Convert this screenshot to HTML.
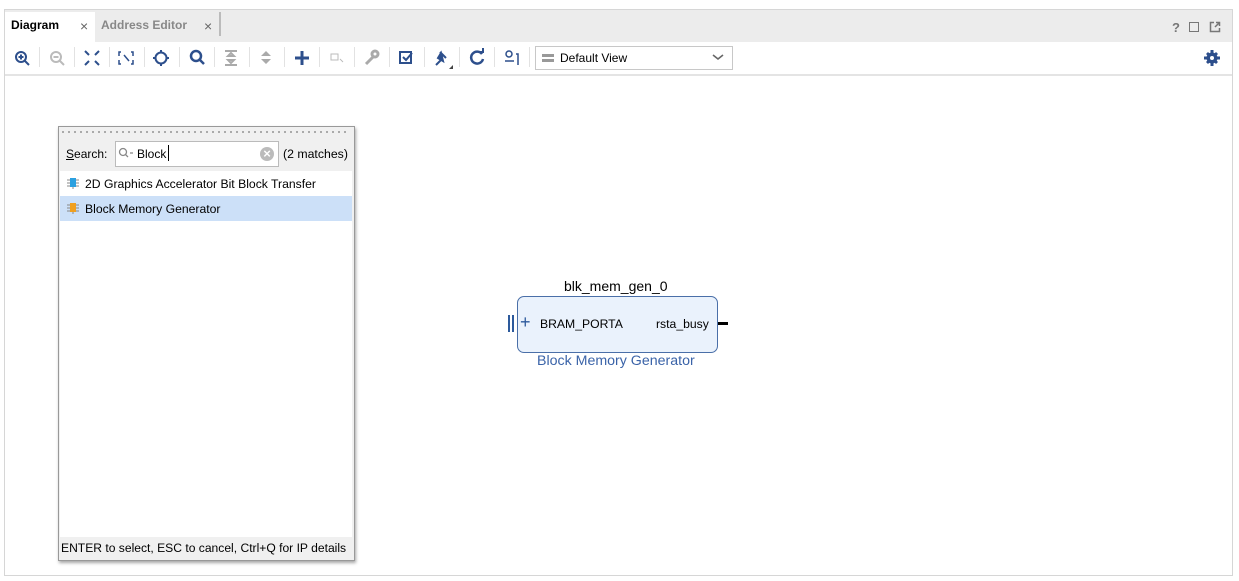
<!DOCTYPE html><html><head><style>
body{margin:0;width:1239px;height:581px;background:#fff;font-family:"Liberation Sans",sans-serif;position:relative;overflow:hidden}
.a{position:absolute}
.sep{position:absolute;top:47px;width:1px;height:20px;background:#e2e2e2}
</style></head><body>
<div class="a" style="left:4px;top:9px;width:1227px;height:565px;border:1px solid #d6d6d6;background:#fff"></div>
<div class="a" style="left:5px;top:10px;width:1227px;height:32px;background:#ececec"></div>
<div class="a" style="left:5px;top:12px;width:90px;height:30px;background:#fff"></div>
<div class="a" style="left:11px;top:18px;font-size:12px;font-weight:bold;color:#000">Diagram</div>
<div class="a" style="left:80px;top:18px;font-size:14px;color:#666">×</div>
<div class="a" style="left:101px;top:18px;font-size:12px;font-weight:bold;color:#888">Address Editor</div>
<div class="a" style="left:204px;top:18px;font-size:14px;color:#666">×</div>
<div class="a" style="left:219px;top:12px;width:2px;height:24px;background:#bbb"></div>
<div class="a" style="left:1172px;top:20px;font-size:13px;font-weight:bold;color:#777">?</div>
<div class="a" style="left:1189px;top:22px;width:8px;height:8px;border:1.5px solid #777"></div>
<svg class="a" style="left:1209px;top:21px" width="12" height="12"><path d="M5 1.5H1.5v9h9V7M7 1.5h3.5V5M10.5 1.5L6 6" stroke="#777" stroke-width="1.5" fill="none"/></svg>
<div class="a" style="left:5px;top:74px;width:1227px;height:2px;background:#e4e4e4"></div>
<svg class="a" style="left:0;top:40px" width="540" height="36" fill="none" stroke-width="2">
<g stroke="#2d4f8c"><circle cx="21" cy="17" r="5"/><path d="M25 21l4 4M18.5 17h5M21 14.5v5"/></g>
<g stroke="#bbb"><circle cx="56" cy="17" r="5"/><path d="M60 21l4 4M53.5 17h5"/></g>
<g stroke="#2d4f8c"><path d="M85 11l4 4M99 11l-4 4M85 25l4-4M99 25l-4-4"/></g>
<g stroke="#2d4f8c" stroke-width="1.5"><path d="M121 12h-2v4M131 12h2v4M121 24h-2v-4M131 24h2v-4"/><path d="M124 15l5 6" /></g>
<g stroke="#2d4f8c"><circle cx="161" cy="18" r="5.5"/><path d="M161 10v3M161 23v3M153 18h3M166 18h3"/></g>
<g stroke="#2d4f8c" stroke-width="2.5"><circle cx="196" cy="16" r="5"/><path d="M200 20l4 4"/></g>
<g stroke="#aaa"><path d="M225 11h12M225 25h12M231 13l-3 3h6zM231 23l-3-3h6z"/></g>
<g fill="#aaa" stroke="none"><path d="M261 16l5-5 5 5zM261 19l5 5 5-5z"/></g>
<g stroke="#2d4f8c" stroke-width="3"><path d="M302 11v14M295 18h14"/></g>
<g stroke="#bbb" stroke-width="1"><rect x="331" y="14" width="7" height="6"/><path d="M340 19l3 3"/></g>
<g stroke="#aaa" stroke-width="3"><path d="M366 24l7-7"/><circle cx="375" cy="14" r="3"/></g>
<g stroke="#2d4f8c"><rect x="400" y="12" width="11" height="11"/><path d="M403 17l3 3 6-7"/></g>
<g fill="#2d4f8c" stroke="#2d4f8c"><path d="M436 25l5-5M440 12l6 6M441 13l-3 5 5 3z"/></g><path d="M449 29l4-4v4z" fill="#444"/>
<g stroke="#2d4f8c" stroke-width="2.5"><path d="M482 14a6 6 0 1 0 1 5"/><path d="M478 12h5v-4" stroke-width="2"/></g>
<g stroke="#2d4f8c" stroke-width="1.5"><circle cx="509" cy="14" r="3"/><path d="M505 21h9M516 14h2v11"/></g>
</svg>
<div class="sep" style="left:39px"></div><div class="sep" style="left:74px"></div><div class="sep" style="left:109px"></div><div class="sep" style="left:144px"></div><div class="sep" style="left:179px"></div><div class="sep" style="left:214px"></div><div class="sep" style="left:249px"></div><div class="sep" style="left:284px"></div><div class="sep" style="left:319px"></div><div class="sep" style="left:354px"></div><div class="sep" style="left:389px"></div><div class="sep" style="left:424px"></div><div class="sep" style="left:459px"></div><div class="sep" style="left:494px"></div><div class="sep" style="left:529px"></div>
<div class="a" style="left:535px;top:46px;width:196px;height:22px;border:1px solid #c8c8c8;background:#fff"></div>
<div class="a" style="left:542px;top:54px;width:12px;height:3px;background:#999;box-shadow:0 5px 0 #999"></div>
<div class="a" style="left:560px;top:51px;font-size:12px;color:#000">Default View</div>
<svg class="a" style="left:712px;top:53px" width="12" height="8"><path d="M1 2l5 4 5-4" stroke="#666" stroke-width="1.6" fill="none"/></svg>
<svg class="a" style="left:1203px;top:49px" width="18" height="18"><g fill="#2d4f8c"><circle cx="9" cy="9" r="5.5"/><path d="M7.5 1h3v16h-3zM1 7.5h16v3H1z"/><path d="M3 5l2-2 10 10-2 2zM13 3l2 2-10 10-2-2z"/></g><circle cx="9" cy="9" r="2" fill="#fff"/></svg>
<div class="a" style="left:58px;top:126px;width:295px;height:433px;background:#f0f0f0;border:1px solid #999;box-shadow:1px 2px 3px rgba(0,0,0,.35)"></div>
<div class="a" style="left:62px;top:131px;width:288px;height:2px;background:repeating-linear-gradient(90deg,#aaa 0 2px,transparent 2px 6px)"></div>
<div class="a" style="left:66px;top:147px;font-size:12px;color:#000"><u>S</u>earch:</div>
<div class="a" style="left:115px;top:141px;width:162px;height:24px;border:1px solid #bbb;background:#fff"></div>
<svg class="a" style="left:118px;top:147px" width="16" height="12"><circle cx="5" cy="5" r="3.5" stroke="#888" fill="none" stroke-width="1.3"/><path d="M7.5 7.5l2.5 2.5M12 6h3" stroke="#888" stroke-width="1.3"/></svg>
<div class="a" style="left:137px;top:147px;font-size:12px;color:#000">Block</div>
<div class="a" style="left:168px;top:145px;width:1px;height:16px;background:#000"></div>
<div class="a" style="left:260px;top:147px;width:14px;height:14px;border-radius:50%;background:#bbb;color:#fff;font-size:13px;line-height:13px;text-align:center;font-weight:bold">×</div>
<div class="a" style="left:283px;top:147px;font-size:12.3px;color:#000">(2 matches)</div>
<div class="a" style="left:60px;top:171px;width:292px;height:366px;background:#fff"></div>
<div class="a" style="left:60px;top:196px;width:292px;height:25px;background:#cce0f8"></div>
<svg class="a" style="left:66px;top:177px" width="14" height="12"><path d="M1 3h3M1 6h3M1 9h3M10 3h3M10 6h3M10 9h3M7 10v2" stroke="#888" stroke-width="1"/><rect x="4" y="1" width="6" height="9" fill="#2ba0e0"/></svg>
<div class="a" style="left:85px;top:177px;font-size:12.2px;color:#000">2D Graphics Accelerator Bit Block Transfer</div>
<svg class="a" style="left:66px;top:202px" width="14" height="12"><path d="M1 3h3M1 6h3M1 9h3M10 3h3M10 6h3M10 9h3M7 10v2" stroke="#888" stroke-width="1"/><rect x="4" y="1" width="6" height="9" fill="#f0a020"/></svg>
<div class="a" style="left:85px;top:202px;font-size:12.2px;color:#000">Block Memory Generator</div>
<div class="a" style="left:61px;top:541px;font-size:12.1px;color:#000">ENTER to select, ESC to cancel, Ctrl+Q for IP details</div>
<div class="a" style="left:564px;top:278px;font-size:14px;color:#000">blk_mem_gen_0</div>
<div class="a" style="left:517px;top:296px;width:199px;height:55px;border:1px solid #4a6fa8;border-radius:7px;background:#eaf2fc"></div>
<div class="a" style="left:508px;top:315px;width:2px;height:17px;background:#2d5a9c;box-shadow:4px 0 0 #2d5a9c"></div>
<div class="a" style="left:520px;top:312px;font-size:18px;color:#2d5a9c">+</div>
<div class="a" style="left:540px;top:317px;font-size:12.2px;color:#000">BRAM_PORTA</div>
<div class="a" style="left:656px;top:317px;font-size:12.2px;color:#000">rsta_busy</div>
<div class="a" style="left:718px;top:322px;width:10px;height:3px;background:#000"></div>
<div class="a" style="left:537px;top:353px;font-size:14.2px;color:#3a63a8">Block Memory Generator</div>
</body></html>
